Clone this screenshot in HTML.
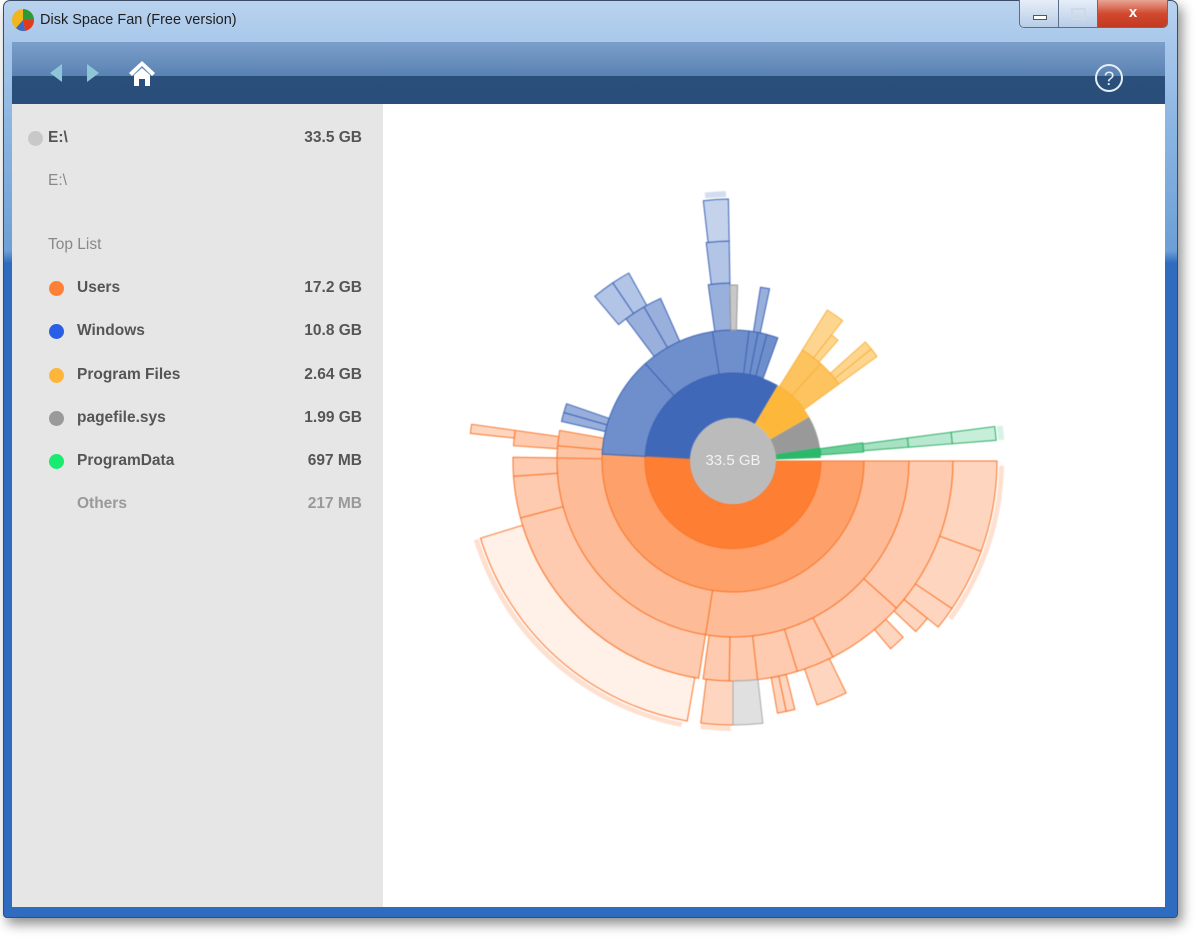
<!DOCTYPE html>
<html><head><meta charset="utf-8"><style>
html,body{margin:0;padding:0;background:#fff;width:1200px;height:942px;overflow:hidden;font-family:"Liberation Sans",sans-serif}
.win{position:absolute;left:3px;top:0;width:1175px;height:918px;border-radius:7px 7px 4px 4px;
background:linear-gradient(180deg,#b9d3ee 0,#a9c8ea 40px,#8db6e2 120px,#6c9fd6 250px,#2f6cc0 262px,#2f6cc0 100%);
box-shadow:4px 6px 12px rgba(0,0,0,.45);border:1px solid #3a4c66;box-sizing:border-box}
.title{position:absolute;left:40px;top:12px;font-size:14.5px;color:#1e1e1e}
.tb{position:absolute;left:12px;top:42px;width:1153px;height:62px;background:linear-gradient(180deg,#7b9fcb 0,#5a82b2 34px,#2b4f7b 34px,#2a4e7a 100%)}
.side{position:absolute;left:12px;top:104px;width:371px;height:803px;background:#e6e6e6}
.main{position:absolute;left:383px;top:104px;width:782px;height:803px;background:#fff}
.row{position:absolute;left:0;width:371px;font-size:15.5px;font-weight:bold;color:#555}
.row .n{position:absolute;left:65px}
.row .v{position:absolute;right:21px}
.dot{position:absolute;left:37px;top:2px;width:15px;height:15px;border-radius:50%}
.btns{position:absolute;left:1019px;top:0;width:147px;height:27px;border:1px solid #5a6f8c;border-top:none;border-radius:0 0 5px 5px;overflow:hidden}
</style></head><body>
<div class="win"></div>
<svg style="position:absolute;left:11px;top:8px" width="24" height="24" viewBox="0 0 24 24"><circle cx="12" cy="12" r="11" fill="#f2b51c"/><path d="M12 12 L12 1 A11 11 0 0 1 23 12Z" fill="#2d9a3a"/><path d="M12 12 L23 12 A11 11 0 0 1 14 23Z" fill="#e33a1e"/><path d="M12 12 L14 23 A11 11 0 0 1 5 20Z" fill="#3a6ccc"/></svg>
<div class="title">Disk Space Fan (Free version)</div>
<div class="btns">
<div style="position:absolute;left:0;top:0;width:38px;height:27px;background:linear-gradient(#e6eef8,#b8cde6);border-right:1px solid #5a6f8c"><div style="position:absolute;left:13px;top:15px;width:12px;height:3px;background:#fff;border:1px solid #555"></div></div>
<div style="position:absolute;left:39px;top:0;width:38px;height:27px;background:linear-gradient(#e6eef8,#b8cde6)"><div style="position:absolute;left:12px;top:8px;width:11px;height:8px;border:2px solid #cfd9e6"></div></div>
<div style="position:absolute;left:77px;top:0;width:70px;height:27px;background:linear-gradient(#e8a595,#d2492f 50%,#c23a22);color:#fff;font-weight:bold;font-size:15px;text-align:center;line-height:25px;border-left:1px solid #5a6f8c">x</div>
</div>
<div class="tb"></div>
<svg style="position:absolute;left:45px;top:60px" width="120" height="30"><path d="M5 13 L17 4 L17 22Z" fill="#8ec6d8"/><path d="M42 4 L54 13 L42 22Z" fill="#8ec6d8"/><path d="M97 1 L84 13 L87 16 L97 6 L107 16 L110 13Z" fill="#fff"/><path d="M89 15 L97 8 L105 15 L105 26 L100 26 L100 19 L94 19 L94 26 L89 26Z" fill="#fff"/></svg>
<svg style="position:absolute;left:1093px;top:62px" width="32" height="32"><circle cx="16" cy="16" r="13" fill="none" stroke="#e6eef6" stroke-width="2"/><text x="16" y="23" text-anchor="middle" font-size="19" fill="#e6eef6" font-family="Liberation Sans">?</text></svg>
<div class="side">
<div class="row" style="top:25px"><div class="dot" style="background:#c8c8c8;left:16px"></div><span class="n" style="left:36px">E:\</span><span class="v">33.5 GB</span></div>
<div class="row" style="top:68px;color:#888"><span class="n" style="left:36px;font-weight:normal">E:\</span></div>
<div class="row" style="top:132px;color:#888;font-weight:normal"><span class="n" style="left:36px">Top List</span></div>
<div class="row" style="top:175px"><div class="dot" style="background:#fe8036"></div><span class="n">Users</span><span class="v">17.2 GB</span></div>
<div class="row" style="top:218px"><div class="dot" style="background:#2a5ee6"></div><span class="n">Windows</span><span class="v">10.8 GB</span></div>
<div class="row" style="top:262px"><div class="dot" style="background:#fdb63a"></div><span class="n">Program Files</span><span class="v">2.64 GB</span></div>
<div class="row" style="top:305px"><div class="dot" style="background:#9a9a9a"></div><span class="n">pagefile.sys</span><span class="v">1.99 GB</span></div>
<div class="row" style="top:348px"><div class="dot" style="background:#18ec70"></div><span class="n">ProgramData</span><span class="v">697 MB</span></div>
<div class="row" style="top:391px;color:#999"><span class="n">Others</span><span class="v">217 MB</span></div>
</div>
<div class="main"></div>
<svg id="c" style="position:absolute;left:0;top:0;filter:blur(0.4px)" width="1200" height="942"></svg>
<div style="position:absolute;left:690px;top:452px;width:86px;text-align:center;color:#f2f2f2;font-size:15px;z-index:2">33.5 GB</div>
<script>
var cx=733,cy=461,s='';
function seg(a0,a1,r0,r1,f,st){var R=Math.PI/180;function p(a,r){return (cx+r*Math.cos(a*R)).toFixed(1)+' '+(cy+r*Math.sin(a*R)).toFixed(1)}
var l=(a1-a0)>180?1:0;s+='<path d="M'+p(a0,r0)+' L'+p(a0,r1)+' A'+r1+' '+r1+' 0 '+l+' 1 '+p(a1,r1)+' L'+p(a1,r0)+' A'+r0+' '+r0+' 0 '+l+' 0 '+p(a0,r0)+'Z" fill="'+f+'" stroke="'+(st||'none')+'" stroke-width="1"/>';}
var O='#f9752a',B='#3d64b4',Y='#f8b23a',G='#2aae64';
seg(0,183,43,88,'#fe7f33',O);seg(183,300.6,43,88,'#4068b8');seg(300.6,330,43,88,'#fdb83b');seg(330,351,43,88,'#999');seg(351,358,43,88,'#2bb86b');
seg(0,183,88,131,'#fea06a',O);
seg(0,99,131,176,'#fdbc97',O);seg(99,183,131,176,'#fdbc97',O);
seg(99,165,176,220,'#fecbb0',O);seg(0,42,176,220,'#fecbb0',O);seg(42,63,176,220,'#fecbb0',O);seg(63,73,176,220,'#fecbb0',O);seg(73,83.6,176,220,'#fecbb0',O);seg(83.6,91,176,220,'#fecbb0',O);seg(91,97.8,176,220,'#fecbb0',O);
seg(165,176,176,220,'#fecbb0',O);seg(176,181,176,220,'#fecbb0',O);seg(181,185,131,176,'#fdc4a4',O);seg(185,190,131,176,'#fdc4a4',O);seg(184,188,176,220,'#fecbb0',O);seg(186,188,220,264,'#fed6c0',O);
seg(100,163,220,264,'#fff0e8',O);seg(101,163,266,271,'#fde0d0');
seg(0,20,220,264,'#fed6c0',O);seg(20,34,220,264,'#fed6c0',O);seg(34,39,220,264,'#fed6c0',O);seg(39,43,220,250,'#fed6c0',O);seg(1,36,266,271,'#fde0d0');
seg(46,50,220,245,'#fed6c0',O);
seg(64,71,220,258,'#fed6c0',O);seg(76,78,220,256,'#fed6c0',O);seg(78,80,220,256,'#fed6c0',O);
seg(90,97,220,264,'#fed6c0',O);seg(83.5,90,220,264,'#e0e0e0','#aaa');seg(90.5,97,265,270,'#fde0d0');
seg(183,228,88,131,'#6f8fcc',B);seg(228,261,88,131,'#6f8fcc',B);seg(261,277,88,131,'#6f8fcc',B);seg(277,281,88,131,'#6f8fcc',B);seg(281,285,88,131,'#6f8fcc',B);seg(285,290,88,131,'#6f8fcc',B);
seg(193,196,131,176,'#98afdc',B);seg(196,199,131,176,'#98afdc',B);
seg(233,240,131,178,'#9ab0dc',B);seg(240,246,131,178,'#9ab0dc',B);seg(230,236,178,215,'#b3c5e6',B);seg(236,241,178,215,'#b3c5e6',B);
seg(262,269,131,178,'#9ab0dc',B);seg(263,269,178,220,'#b3c5e6',B);seg(263.5,269,220,262,'#c4d2ec',B);seg(264,268.5,264,270,'#d3ddef');
seg(269,271.5,131,176,'#c8c8c8','#999');seg(279,282,131,176,'#98afdc',B);
seg(302,312,88,131,'#fdc35f',Y);seg(312,324,88,131,'#fdc35f',Y);seg(302,308,131,178,'#fed58f',Y);seg(308,311,131,160,'#fed58f',Y);seg(318,321,131,178,'#fed58f',Y);seg(321,324,131,178,'#fed58f',Y);
seg(352,356,88,131,'#6ccf98',G);seg(352.5,355.5,131,176,'#a7e2c2',G);seg(352.5,355.5,176,220,'#b8e8cf',G);seg(352.5,355.5,220,264,'#c7eed9',G);seg(352.5,355.5,266,272,'#d6f3e4');
s+='<circle cx="'+cx+'" cy="'+cy+'" r="43" fill="#bbbbbb"/>';
document.getElementById('c').innerHTML=s;
</script>
</body></html>
